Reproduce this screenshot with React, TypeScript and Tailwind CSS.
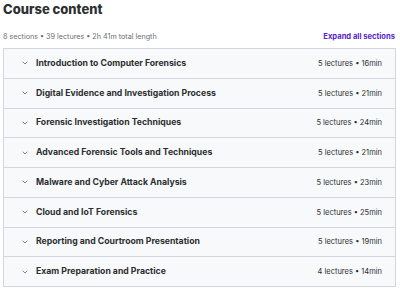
import React from 'react';

const sections = [
  { title: 'Introduction to Computer Forensics', meta: '5 lectures • 16min' },
  { title: 'Digital Evidence and Investigation Process', meta: '5 lectures • 21min' },
  { title: 'Forensic Investigation Techniques', meta: '5 lectures • 24min' },
  { title: 'Advanced Forensic Tools and Techniques', meta: '5 lectures • 21min' },
  { title: 'Malware and Cyber Attack Analysis', meta: '5 lectures • 23min' },
  { title: 'Cloud and IoT Forensics', meta: '5 lectures • 25min' },
  { title: 'Reporting and Courtroom Presentation', meta: '5 lectures • 19min' },
  { title: 'Exam Preparation and Practice', meta: '4 lectures • 14min' },
];

function Chevron() {
  return (
    <svg width="8" height="8" viewBox="0 0 24 24" fill="none" stroke="#6a6f73" strokeWidth="2.5" strokeLinecap="round" strokeLinejoin="round">
      <path d="M6 9l6 6 6-6" />
    </svg>
  );
}

export default function App() {
  return (
    <div className="w-[400px] h-[291px] bg-white overflow-hidden px-[3px] pr-[4px] font-['Inter',sans-serif] text-[#2d2f31]">
      <h2 className="text-[13px] font-extrabold leading-[17px] pt-[1px]">Course content</h2>
      <div className="flex items-center justify-between mt-[12px] h-[14px]">
        <span className="text-[7.2px] text-[#6a6f73]">8 sections • 39 lectures • 2h 41m total length</span>
        <button className="text-[7.6px] font-bold text-[#5624d0] pr-[1px]">Expand all sections</button>
      </div>
      <div className="mt-[4px] border-t border-x border-[#d1d7dc]">
        {sections.map((s) => (
          <div key={s.title} className="h-[29.75px] flex items-center bg-[#f7f9fa] border-b border-[#d1d7dc] pl-[17px] pr-[13px]">
            <Chevron />
            <span className="ml-[7px] text-[8.7px] font-bold">{s.title}</span>
            <span className="ml-auto text-[7.5px] text-[#2d2f31]">{s.meta}</span>
          </div>
        ))}
      </div>
    </div>
  );
}
